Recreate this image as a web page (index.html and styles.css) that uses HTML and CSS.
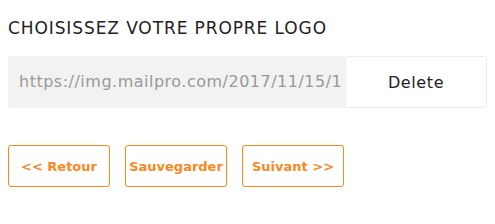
FILE: index.html
```html
<!DOCTYPE html>
<html>
<head>
<meta charset="utf-8">
<link rel="stylesheet" href="styles.css">
</head>
<body>
<div class="page">
  <h1 class="title">CHOISISSEZ VOTRE PROPRE LOGO</h1>
  <div class="field">
    <div class="url">https://img.mailpro.com/2017/11/15/1</div>
    <button class="delete">Delete</button>
  </div>
  <div class="actions">
    <button class="btn">&lt;&lt; Retour</button>
    <button class="btn">Sauvegarder</button>
    <button class="btn">Suivant &gt;&gt;</button>
  </div>
</div>
</body>
</html>
```
FILE: styles.css
```css
html, body { margin: 0; padding: 0; background: #fff; }
body { font-family: "DejaVu Sans", Verdana, sans-serif; }
.page { padding: 8px; }
.title {
  margin: 10px 0 0 0;
  font-size: 17px;
  font-weight: normal;
  color: #222;
  line-height: 20px;
  letter-spacing: 0.9px;
}
.field {
  display: flex;
  margin-top: 18px;
  width: 479px;
  height: 52px;
}
.url {
  width: 337px;
  box-sizing: border-box;
  background: #f2f2f2;
  border-radius: 3px 0 0 3px;
  color: #999;
  font-size: 16px;
  letter-spacing: 0.5px;
  line-height: 52px;
  padding-left: 11px;
  white-space: nowrap;
  overflow: hidden;
}
.delete {
  flex: 1;
  background: #fff;
  border: 1px solid #ececec;
  border-radius: 3px;
  font-family: inherit;
  font-size: 16px;
  letter-spacing: 0.6px;
  color: #222;
  padding: 0;
}
.actions {
  display: flex;
  gap: 15px;
  margin-top: 37px;
}
.btn {
  width: 102px;
  height: 42px;
  box-sizing: border-box;
  background: #fff;
  border: 1px solid #f7891f;
  border-radius: 3px;
  color: #f7891f;
  font-family: inherit;
  font-weight: bold;
  font-size: 13px;
  padding: 0;
  white-space: nowrap;
}
```
